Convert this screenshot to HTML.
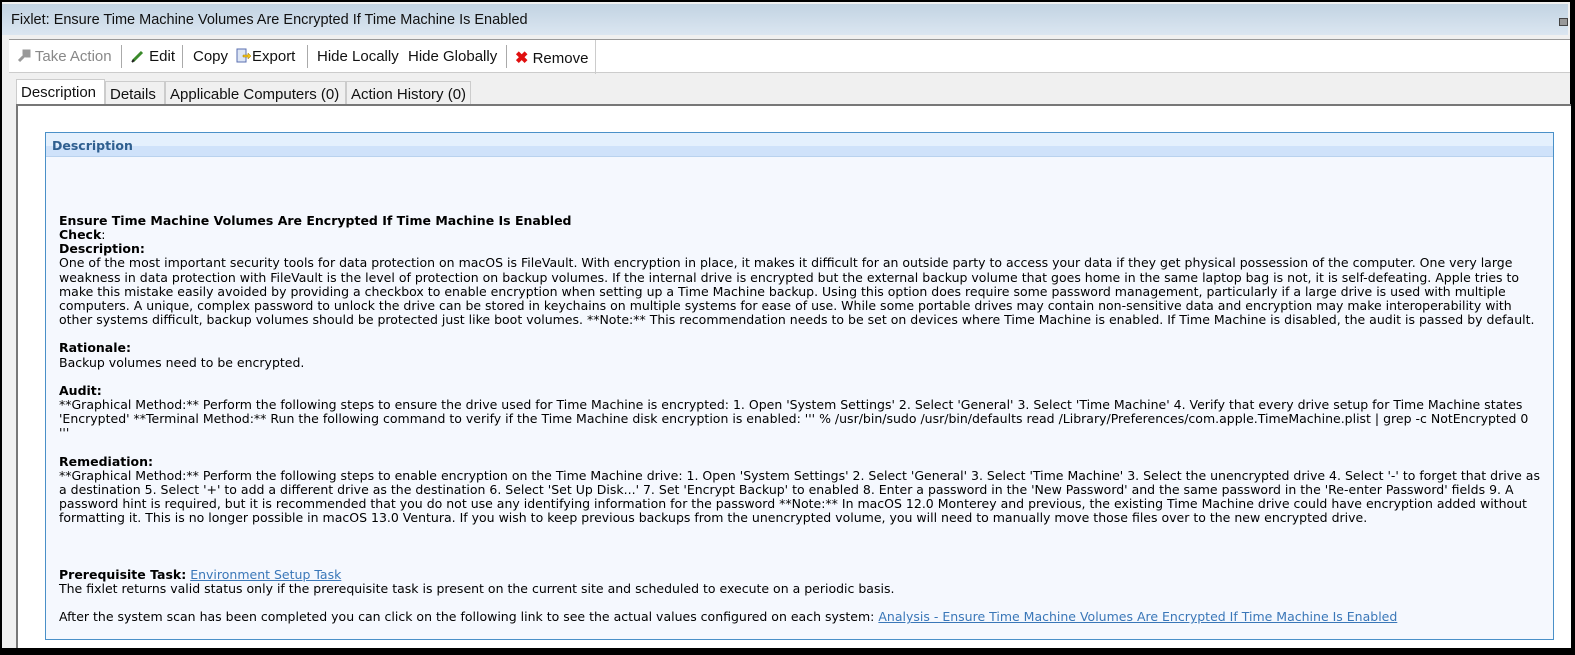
<!DOCTYPE html>
<html><head><meta charset="utf-8"><style>
*{margin:0;padding:0;box-sizing:border-box}
body{width:1575px;height:655px;overflow:hidden;background:#000;position:relative;font-family:"Liberation Sans",sans-serif}
.win{position:absolute;left:2px;top:2px;width:1568px;height:646px;background:#f0f0f0}
.title{position:absolute;left:0;top:2px;width:1566px;height:31px;background:linear-gradient(#c2d3e2,#dbe6f1);font-size:14.5px;color:#111;padding:8px 0 0 9px}
.tb{position:absolute;left:7px;top:37px;width:1561px;height:34px;background:#fff;border-top:1px solid #999;border-bottom:1px solid #ccc;font-size:15px;color:#111}
.tb span{position:absolute;top:8px;white-space:nowrap}
.sep{position:absolute;top:5px;width:1px;height:23px;background:#aaa}
.tabs{position:absolute;left:14px;top:77px;font-size:15px;color:#111}
.tab{position:absolute;top:2px;height:26px;border:1px solid #ccc;border-bottom:none;background:#f0f0f0;padding:4px 4px 0 4px;white-space:nowrap}
.tab.act{top:0;height:29px;background:#fff;padding-top:4px}
.panel{position:absolute;left:16px;top:104px;width:1555px;height:544px;background:#fff;border-top:2px solid #777;border-left:2px solid #777}
.box{position:absolute;left:45px;top:132px;width:1509px;height:508px;background:#f5f8fe;border:1px solid #4a90c8}
.boxh{position:absolute;left:0;top:0;width:100%;height:24px;background:linear-gradient(#e4f0fd 0,#e4f0fd 13px,#cfe2fa 13px);border-bottom:1px solid #b9d2ee;font:bold 12.5px "DejaVu Sans",sans-serif;color:#2f5f8f;padding:5px 0 0 6px}
.t{position:absolute;left:59px;font:12.5px/14.15px "DejaVu Sans",sans-serif;color:#000;white-space:pre}
.t b{font-weight:bold}
a{color:#3a77b8;text-decoration:underline}
</style></head><body>
<div class="win">
<div class="title">Fixlet: Ensure Time Machine Volumes Are Encrypted If Time Machine Is Enabled</div>
<div style="position:absolute;right:2px;top:16px;width:9px;height:8px;border:1px solid #444;background:#999"></div>
<div class="tb">
<span style="left:8px;color:#888"><svg width="14" height="14" viewBox="0 0 14 14" style="vertical-align:-2px"><path d="M2 12 L8 6 M7 2 L12 2 L12 7 L9 7 L7 5Z" stroke="#999" stroke-width="3" fill="#999"/></svg> Take Action</span>
<div class="sep" style="left:112px"></div>
<span style="left:122px"><svg width="14" height="14" viewBox="0 0 14 14" style="vertical-align:-2px"><path d="M2 12 L11 3" stroke="#3a8a2a" stroke-width="3"/><path d="M1 13 L3 11" stroke="#222" stroke-width="2"/></svg> Edit</span>
<div class="sep" style="left:173px"></div>
<span style="left:184px">Copy</span>
<span style="left:227px"><svg width="16" height="15" viewBox="0 0 16 15" style="vertical-align:-2px"><rect x="1" y="1" width="9" height="13" fill="#dde6f5" stroke="#5a6fb0"/><path d="M7 7 H12 V5 L15 8 L12 11 V9 H7Z" fill="#f2c21a" stroke="#a07a00" stroke-width=".5"/></svg>Export</span>
<div class="sep" style="left:298px"></div>
<span style="left:308px">Hide Locally</span>
<span style="left:399px">Hide Globally</span>
<div class="sep" style="left:497px"></div>
<span style="left:506px"><b style="color:#e01010;font-size:16px">✖</b> Remove</span>
<div class="sep" style="left:586px;height:34px;top:0;background:#ccc"></div>
</div>
<div class="tabs">
<div class="tab act" style="left:0;width:89px">Description</div>
<div class="tab" style="left:89px;width:60px">Details</div>
<div class="tab" style="left:149px;width:181px">Applicable Computers (0)</div>
<div class="tab" style="left:330px;width:125px">Action History (0)</div>
</div>
</div>
<div class="panel"></div>
<div class="box"><div class="boxh">Description</div></div>
<div class="t" style="top:214px"><b>Ensure Time Machine Volumes Are Encrypted If Time Machine Is Enabled</b>
<b>Check</b>:
<b>Description:</b>
One of the most important security tools for data protection on macOS is FileVault. With encryption in place, it makes it difficult for an outside party to access your data if they get physical possession of the computer. One very large
weakness in data protection with FileVault is the level of protection on backup volumes. If the internal drive is encrypted but the external backup volume that goes home in the same laptop bag is not, it is self-defeating. Apple tries to
make this mistake easily avoided by providing a checkbox to enable encryption when setting up a Time Machine backup. Using this option does require some password management, particularly if a large drive is used with multiple
computers. A unique, complex password to unlock the drive can be stored in keychains on multiple systems for ease of use. While some portable drives may contain non-sensitive data and encryption may make interoperability with
other systems difficult, backup volumes should be protected just like boot volumes. **Note:** This recommendation needs to be set on devices where Time Machine is enabled. If Time Machine is disabled, the audit is passed by default.

<b>Rationale:</b>
Backup volumes need to be encrypted.

<b>Audit:</b>
**Graphical Method:** Perform the following steps to ensure the drive used for Time Machine is encrypted: 1. Open 'System Settings' 2. Select 'General' 3. Select 'Time Machine' 4. Verify that every drive setup for Time Machine states
'Encrypted' **Terminal Method:** Run the following command to verify if the Time Machine disk encryption is enabled: ''' % /usr/bin/sudo /usr/bin/defaults read /Library/Preferences/com.apple.TimeMachine.plist | grep -c NotEncrypted 0
'''

<b>Remediation:</b>
**Graphical Method:** Perform the following steps to enable encryption on the Time Machine drive: 1. Open 'System Settings' 2. Select 'General' 3. Select 'Time Machine' 3. Select the unencrypted drive 4. Select '-' to forget that drive as
a destination 5. Select '+' to add a different drive as the destination 6. Select 'Set Up Disk...' 7. Set 'Encrypt Backup' to enabled 8. Enter a password in the 'New Password' and the same password in the 'Re-enter Password' fields 9. A
password hint is required, but it is recommended that you do not use any identifying information for the password **Note:** In macOS 12.0 Monterey and previous, the existing Time Machine drive could have encryption added without
formatting it. This is no longer possible in macOS 13.0 Ventura. If you wish to keep previous backups from the unencrypted volume, you will need to manually move those files over to the new encrypted drive.



<b>Prerequisite Task:</b> <a>Environment Setup Task</a>
The fixlet returns valid status only if the prerequisite task is present on the current site and scheduled to execute on a periodic basis.

After the system scan has been completed you can click on the following link to see the actual values configured on each system: <a>Analysis - Ensure Time Machine Volumes Are Encrypted If Time Machine Is Enabled</a></div>
</body></html>
